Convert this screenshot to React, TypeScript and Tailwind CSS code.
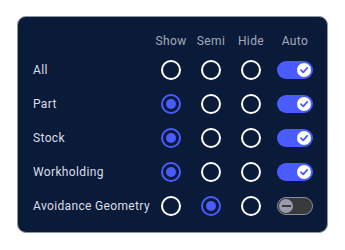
import React from "react";

type Mode = "show" | "semi" | "hide" | "none";

const rows: { label: string; mode: Mode; auto: boolean }[] = [
  { label: "All", mode: "none", auto: true },
  { label: "Part", mode: "show", auto: true },
  { label: "Stock", mode: "show", auto: true },
  { label: "Workholding", mode: "show", auto: true },
  { label: "Avoidance Geometry", mode: "semi", auto: false },
];

function Radio({ on }: { on: boolean }) {
  return (
    <span
      className={
        on
          ? "flex h-[20px] w-[20px] items-center justify-center rounded-full border-2 border-[#4a5cff]"
          : "flex h-[20px] w-[20px] items-center justify-center rounded-full border-2 border-white"
      }
    >
      {on && <span className="h-[10px] w-[10px] rounded-full bg-[#4a5cff]" />}
    </span>
  );
}

function Toggle({ on }: { on: boolean }) {
  if (on) {
    return (
      <span className="flex h-[18px] w-[36px] items-center justify-end rounded-full bg-[#4a5cff] pr-[2px]">
        <span className="flex h-[14px] w-[14px] items-center justify-center rounded-full bg-white">
          <svg width="10" height="10" viewBox="0 0 10 10" fill="none">
            <path d="M2 5.2 L4.2 7.3 L8.2 2.8" stroke="#4a5cff" strokeWidth="1.8" strokeLinecap="round" strokeLinejoin="round" />
          </svg>
        </span>
      </span>
    );
  }
  return (
    <span className="flex h-[18px] w-[36px] items-center rounded-full border border-[#8b8d9c] bg-[#3a3a3d] pl-[1px]">
      <span className="flex h-[14px] w-[14px] items-center justify-center rounded-full bg-[#9a9bab]">
        <span className="h-[1.5px] w-[9px] bg-[#3a3a3d]" />
      </span>
    </span>
  );
}

export default function App() {
  return (
    <div className="h-[250px] w-[345px] bg-white pl-[17px] pt-[16px] font-['Roboto',sans-serif]">
      <div className="h-[217px] w-[311px] rounded-[9px] border border-[#8d95a8] bg-[#0a1a39] pl-[15px] pr-[14px] pt-[14px]">
        <div className="grid h-[20px] grid-cols-[minmax(0,1fr)_40px_40px_40px_42px] items-center text-[12px] tracking-[0.4px] text-[#a3aabb]">
          <span />
          <span className="text-center">Show</span>
          <span className="text-center">Semi</span>
          <span className="text-center">Hide</span>
          <span className="pl-[6px] text-center">Auto</span>
        </div>
        <div className="mt-[2px]">
          {rows.map((r) => (
            <div
              key={r.label}
              className="grid h-[34px] grid-cols-[minmax(0,1fr)_40px_40px_40px_42px] items-center text-[12px] tracking-[0.35px] text-[#dadde6]"
            >
              <span className="whitespace-nowrap">{r.label}</span>
              <span className="flex justify-center">
                <Radio on={r.mode === "show"} />
              </span>
              <span className="flex justify-center">
                <Radio on={r.mode === "semi"} />
              </span>
              <span className="flex justify-center">
                <Radio on={r.mode === "hide"} />
              </span>
              <span className="flex justify-end">
                <Toggle on={r.auto} />
              </span>
            </div>
          ))}
        </div>
      </div>
    </div>
  );
}
